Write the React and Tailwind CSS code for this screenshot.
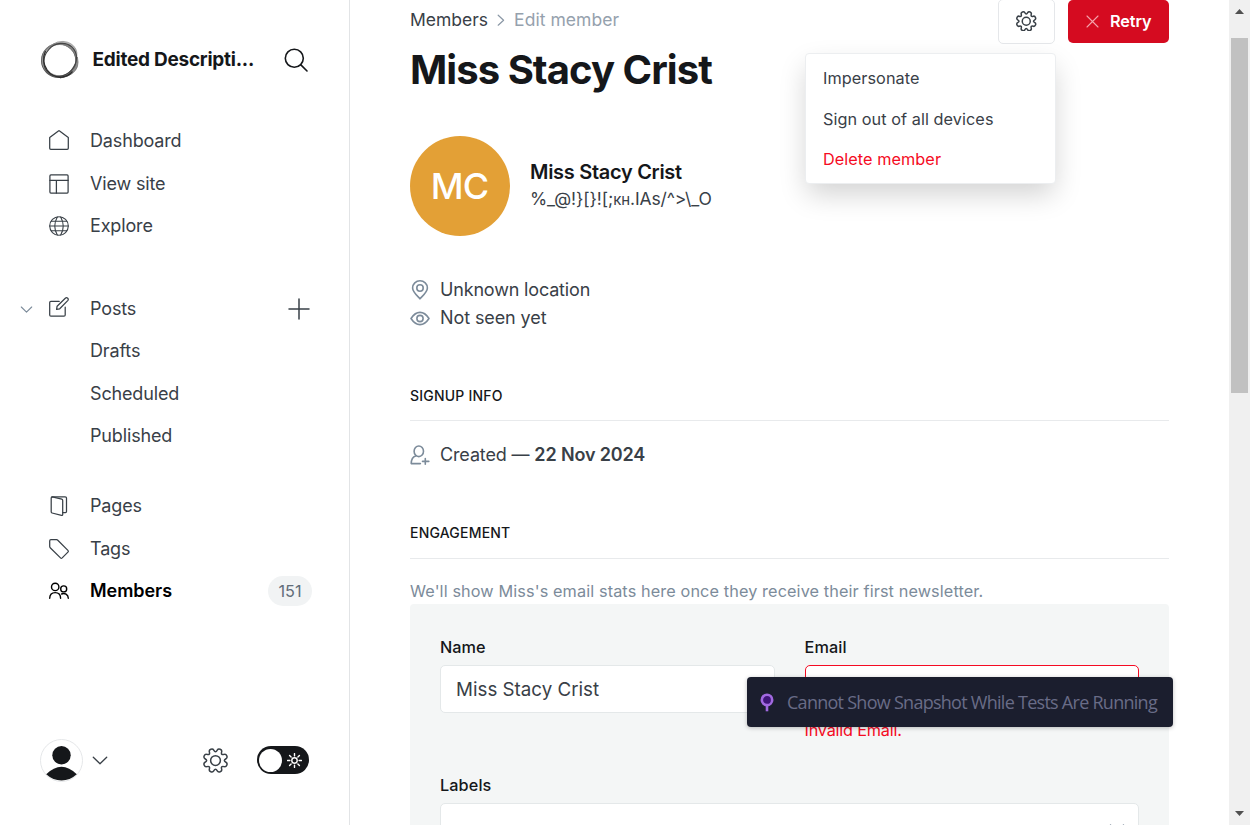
import React from "react";

function gearPath(c, outer, inner) {
  const pts = [];
  for (let i = 0; i < 8; i++) {
    const t = i * 45 + 22.5 - 90;
    pts.push([inner, t - 17], [outer, t - 10], [outer, t + 10], [inner, t + 17]);
  }
  const xy = pts.map(([r, a]) => [
    c + r * Math.cos((a * Math.PI) / 180),
    c + r * Math.sin((a * Math.PI) / 180),
  ]);
  const mid = (a, b) => [(a[0] + b[0]) / 2, (a[1] + b[1]) / 2];
  const f = (p) => `${p[0].toFixed(2)} ${p[1].toFixed(2)}`;
  let d = `M${f(mid(xy[xy.length - 1], xy[0]))}`;
  xy.forEach((p, i) => {
    d += `Q${f(p)} ${f(mid(p, xy[(i + 1) % xy.length]))}`;
  });
  return d + "Z";
}

function Svg({ w, h, sw = 1.25, className = "", children }) {
  return (
    <svg
      width={w}
      height={h}
      viewBox={`0 0 ${w} ${h}`}
      fill="none"
      stroke="currentColor"
      strokeWidth={sw}
      strokeLinecap="round"
      strokeLinejoin="round"
      className={`shrink-0 ${className}`}
    >
      {children}
    </svg>
  );
}

function Gear({ size }) {
  const c = size / 2;
  return (
    <Svg w={size} h={size} sw={1.5}>
      <path d={gearPath(c, c - 0.1, c * 0.71)} />
      <circle cx={c} cy={c} r={size * 0.195} />
    </Svg>
  );
}

const icons = {
  home: (
    <Svg w={20} h={20} className="mb-[2px]">
      <path d="M.7 7.6V18.2q0 1.1 1.1 1.1H18.2q1.1 0 1.1-1.1V7.6L10.6.9q-.6-.4-1.2 0Z" />
    </Svg>
  ),
  layout: (
    <Svg w={20} h={20}>
      <rect x="0.9" y="0.9" width="18.2" height="18.2" rx="1" />
      <path d="M.9 6.4H19.1M7.4 6.4V19.1" />
    </Svg>
  ),
  globe: (
    <Svg w={20} h={20} sw={1.1}>
      <circle cx="10" cy="10" r="9.3" />
      <path d="M.7 10H19.3M2.3 5.2H17.7M2.3 14.8H17.7M8.3.9Q3.2 10 8.3 19.1M11.7.9Q16.8 10 11.7 19.1" />
    </Svg>
  ),
  posts: (
    <Svg w={20} h={20} className="mb-[3px]">
      <path d="M10.2 4.4H1.9q-1.2 0-1.2 1.2V18q0 1.2 1.2 1.2H15q1.2 0 1.2-1.2V10.2" />
      <path d="M7.6 12.4l.5-3.2L16.3 1.2q1.2-1 2.4 0 1.1 1.2 0 2.4L10.7 11.8Z" />
    </Svg>
  ),
  pages: (
    <Svg w={20} h={20}>
      <path d="M3 .8H16.2q1.3 0 1.3 1.3V15.6q0 1-1 1H13.7" />
      <path d="M3.2.8q-1 .1-1 1.2V15.8q0 1 .9 1.2L12.5 19.3q1.2.2 1.2-.9V4.4q0-.9-.9-1.2Z" />
    </Svg>
  ),
  tags: (
    <Svg w={20} h={20}>
      <path d="M.7 1.9Q.7.7 1.9.7H7.6q.7 0 1.2.5L18.9 11.4q.9.9 0 1.7L13.2 18.9q-.9.8-1.7 0L1.2 8.7Q.7 8.2.7 7.6Z" />
    </Svg>
  ),
  members: (
    <Svg w={20} h={20} sw={1.4}>
      <circle cx="6.2" cy="5.9" r="3.7" />
      <path d="M.7 17.3Q.9 11.6 6.2 11.6T11.6 17.3" />
      <circle cx="14.7" cy="7.9" r="3" />
      <path d="M12.6 13Q14.8 11.9 17.1 13.2 19.3 14.6 19.3 17.3" />
    </Svg>
  ),
};

function NavItem({ icon, label, active, children }) {
  return (
    <div
      className={`flex h-[42.5px] items-center text-[18px] leading-6 ${
        active
          ? "font-semibold tracking-[-0.05px] text-black"
          : "tracking-[-0.15px] text-[#394047]"
      }`}
    >
      <span className="ml-[49px] flex w-[41px] shrink-0">{icon}</span>
      <span className="flex-1">{label}</span>
      {children}
    </div>
  );
}

function Sidebar() {
  return (
    <nav className="flex h-full w-[350px] shrink-0 flex-col border-r border-[#e2e4e6] bg-white">
      <div className="flex h-[120px] items-center pl-10 text-[#15171a]">
        <svg width="40" height="40" viewBox="0 0 40 40" fill="none" className="shrink-0">
          <path d="M13 4.2Q17 1.2 23 1.4 32 2 35.8 9 37.3 12 36.8 16 31 4 23 4.2 18 3 13 4.2Z" fill="#b5b5b5" stroke="#8a8a8a" strokeWidth=".7" />
          <path d="M37.4 17Q40 28 32.2 33.5 28 37 20 38 34.5 32 37.4 17Z" fill="#8f8f8f" stroke="#666" strokeWidth=".7" />
          <ellipse cx="18.8" cy="20.6" rx="17.2" ry="16.8" strokeWidth="1.3" stroke="#555" />
          <ellipse cx="19.6" cy="20" rx="17" ry="16.2" strokeWidth="2.2" stroke="#888" strokeOpacity=".8" />
          <ellipse cx="20" cy="19.8" rx="15.4" ry="17.4" strokeWidth="1.2" stroke="#444" transform="rotate(42 20 20)" />
          <path d="M5.5 11Q1 21 7.2 30 12 36.5 20 37.3 28 37 32.5 31.5" strokeWidth="1.2" stroke="#2c2c2c" />
        </svg>
        <span className="ml-[12.5px] w-[179.5px] text-[19px] font-bold tracking-[-0.25px]">Edited Descripti...</span>
        <Svg w={24} h={24} sw={1.6} className="ml-[12px]">
          <circle cx="10.3" cy="10.3" r="9" />
          <path d="M16.9 16.9L23 23" />
        </Svg>
      </div>
      <NavItem icon={icons.home} label="Dashboard" />
      <NavItem icon={icons.layout} label="View site" />
      <NavItem icon={icons.globe} label="Explore" />
      <div className="relative mt-10">
        <Svg w={13} h={8} sw={1.1} className="absolute left-5 top-[18px] text-[#7c8b9a]">
          <path d="M1.3 1L6.5 6.2 11.7 1" />
        </Svg>
        <NavItem icon={icons.posts} label="Posts">
          <Svg w={22} h={22} sw={1.5} className="mr-[39px]">
            <path d="M11 1V21M1 11H21" />
          </Svg>
        </NavItem>
      </div>
      <NavItem label="Drafts" />
      <NavItem label="Scheduled" />
      <NavItem label="Published" />
      <div className="h-[27.5px]" />
      <NavItem icon={icons.pages} label="Pages" />
      <NavItem icon={icons.tags} label="Tags" />
      <NavItem icon={icons.members} label="Members" active>
        <span className="mr-[37px] flex h-[30px] w-11 items-center justify-center rounded-full bg-[#f1f3f4] text-[16.25px] font-normal tracking-normal text-[#626d79]">
          151
        </span>
      </NavItem>
      <div className="mt-auto mb-11 flex h-[42px] items-center pl-10 text-[#394047]">
        <svg width="43" height="43" viewBox="0 0 43 43" className="shrink-0">
          <circle cx="21.5" cy="21.5" r="21" fill="#fff" stroke="#e5e7e9" />
          <circle cx="21.5" cy="16.3" r="9.2" fill="#15171a" />
          <path d="M6.2 35.3Q21.5 20.2 36.8 35.3 30 41.5 21.5 41.5T6.2 35.3Z" fill="#15171a" />
        </svg>
        <Svg w={16} h={9} sw={1.3} className="ml-[9px]">
          <path d="M1.3 1.2L8 7.8 14.7 1.2" />
        </Svg>
        <span className="ml-[95.4px] flex">
          <Gear size={25} />
        </span>
        <span className="ml-[28.6px] flex h-7 w-[52px] items-center justify-between rounded-full bg-[#15171a] pl-0.5 pr-[7px]">
          <span className="h-[23px] w-[23px] rounded-full bg-white" />
          <Svg w={15} h={15} sw={1.4} className="text-white">
            <circle cx="7.5" cy="7.5" r="2.7" />
            <path d="M7.5.6V2.9M7.5 12.1V14.4M.6 7.5H2.9M12.1 7.5H14.4M2.6 2.6L4.1 4.1M10.9 10.9L12.4 12.4M2.6 12.4L4.1 10.9M10.9 4.1L12.4 2.6" />
          </Svg>
        </span>
      </div>
    </nav>
  );
}

function Menu() {
  return (
    <div className="absolute right-[113px] top-[53px] z-10 flex h-[131px] w-[251px] flex-col rounded-[4px] border border-[#eceef0] bg-white pl-[17px] pt-1 text-[16.25px] tracking-[0.06px] text-[#394047] shadow-[0_12px_28px_-2px_rgba(0,0,0,0.18)]">
      <span className="h-[40.6px] leading-[40.6px]">Impersonate</span>
      <span className="h-[40.6px] leading-[40.6px]">Sign out of all devices</span>
      <span className="h-[40.6px] leading-[40.6px] text-[#f50b23]">Delete member</span>
    </div>
  );
}

function Main() {
  return (
    <main className="relative flex h-full w-[759px] shrink-0 flex-col">
      <header className="flex h-[43px] shrink-0">
        <div className="flex h-10 flex-1 items-center text-[17.5px]">
          <span className="text-[#394047]">Members</span>
          <Svg w={8} h={12} sw={1.2} className="ml-[9px] mr-[9px] text-[#8a97a5]">
            <path d="M1.2 1.2L6.6 6.2 1.2 11.2" />
          </Svg>
          <span className="tracking-[0.05px] text-[#95a1ad]">Edit member</span>
        </div>
        <button className="-mt-px mr-[13px] flex h-[45px] w-[57px] items-center justify-center rounded-[5px] border border-[#e5e7ea] pb-px text-[#394047]">
          <Gear size={20.5} />
        </button>
        <button className="flex h-[43px] w-[101px] items-center rounded-[5px] bg-[#d50b20] pl-[18px] text-[16.25px] font-semibold tracking-[-0.1px] text-white">
          <Svg w={13} h={13} sw={1.1} className="mr-[11px] text-[#f5a3ab]">
            <path d="M1 1L12 12M12 1L1 12" />
          </Svg>
          Retry
        </button>
      </header>
      <Menu />
      <h1 className="mt-[3px] h-12 shrink-0 text-[40px] font-bold leading-[48px] tracking-[-0.95px] text-[#15171a]">
        Miss Stacy Crist
      </h1>
      <div className="mt-[42px] flex h-[100px] shrink-0 items-center">
        <div className="flex h-[100px] w-[100px] items-center justify-center rounded-full bg-[#e3a036] pr-px text-[36px] font-medium tracking-[-1px] text-white">
          MC
        </div>
        <div className="ml-5">
          <h3 className="h-[27px] text-[20px] font-semibold leading-[27px] tracking-[-0.3px] text-[#15171a]">Miss Stacy Crist</h3>
          <p className="h-[27px] text-[17.5px] leading-[25px] tracking-[-0.12px] text-[#394047]">
            {"%_@!}[}![;"}
            <span className="text-[15px]">кн</span>
            {".IAs/^>\\_O"}
          </p>
        </div>
      </div>
      <div className="mt-10 flex h-7 shrink-0 items-center text-[18px] tracking-[-0.17px] text-[#394047]">
        <Svg w={20} h={20} sw={1.6} className="mr-[10px] text-[#7c8b9a]">
          <path d="M10 18.8C8 16.6 2.6 12 2.6 8A7.4 7.2 0 0 1 17.4 8C17.4 12 12 16.6 10 18.8Z" />
          <circle cx="10" cy="8" r="3.2" />
        </Svg>
        <span className="pb-[2px]">Unknown location</span>
      </div>
      <div className="flex h-7 shrink-0 items-center text-[18px] tracking-[-0.1px] text-[#394047]">
        <Svg w={20} h={20} sw={1.6} className="mr-[10px] text-[#7c8b9a]">
          <path d="M1 10.5Q5 4.4 10 4.4T19 10.5Q15 16.6 10 16.6T1 10.5Z" />
          <circle cx="10" cy="10.5" r="3.1" />
        </Svg>
        <span className="pb-[2px]">Not seen yet</span>
      </div>
      <h4 className="mt-[54px] h-[35px] shrink-0 border-b border-[#e8eaec] text-[14px] font-medium leading-[20px] tracking-[0.2px] text-[#15171a]">
        SIGNUP INFO
      </h4>
      <div className="mt-5 flex h-7 shrink-0 items-center text-[18px] tracking-[-0.14px] text-[#394047]">
        <Svg w={20} h={20} sw={1.6} className="mr-[10px] text-[#7c8b9a]">
          <ellipse cx="8.8" cy="6.3" rx="4.7" ry="5.3" />
          <path d="M5.7 10.9Q1.3 12.2 1.2 18.6H10.4M15.3 13.6V19.2M12.5 16.4H18.8" />
        </Svg>
        <span className="pb-[2px]">
          Created — <b className="font-semibold">22 Nov 2024</b>
        </span>
      </div>
      <h4 className="mt-[54px] h-[36px] shrink-0 border-b border-[#e8eaec] text-[14px] font-medium leading-[20px] tracking-[0.2px] text-[#15171a]">
        ENGAGEMENT
      </h4>
      <p className="mt-5 h-[25px] shrink-0 text-[16.25px] leading-6 tracking-[0.11px] text-[#7c8b9a]">
        We'll show Miss's email stats here once they receive their first newsletter.
      </p>
      <section className="h-[260px] shrink-0 rounded-t-[4px] bg-[#f4f6f6] px-[30px] pt-8 text-[16.25px] text-[#15171a]">
        <div className="grid h-[138px] grid-cols-2 gap-[30px]">
          <label>
            <span className="block h-[29px] font-medium leading-[23px]">Name</span>
            <span className="flex h-12 items-center rounded-[5px] border border-[#e4e8e9] bg-white pl-[15px] pt-[2px] text-[18.75px] text-[#394047]">
              Miss Stacy Crist
            </span>
          </label>
          <label>
            <span className="block h-[29px] font-medium leading-[23px] tracking-[0.1px]">Email</span>
            <span className="block h-12 rounded-[5px] border border-[#f50b23] bg-white" />
            <span className="block h-[34px] leading-[34px] tracking-[-0.2px] text-[#f50b23]">Invalid Email.</span>
          </label>
        </div>
        <div className="h-[29px] font-medium leading-[23px] tracking-[0.1px]">Labels</div>
        <div className="flex h-12 items-start justify-end rounded-[5px] border border-[#e4e8e9] bg-white pr-[13px] pt-5">
          <Svg w={16} h={9} sw={1.3} className="text-[#7c8b9a]">
            <path d="M1.5 1L8 7.5 14.5 1" />
          </Svg>
        </div>
      </section>
    </main>
  );
}

function Scrollbar() {
  return (
    <div className="ml-auto flex h-full w-[21px] flex-col items-center bg-[#f0f0f0]">
      <svg width="9" height="5" viewBox="0 0 9 5" className="mt-[9px] shrink-0">
        <path d="M0 5L4.5 0 9 5Z" fill="#505050" />
      </svg>
      <div className="mt-6 h-[355px] w-[17px] bg-[#c1c1c1]" />
      <svg width="9" height="5" viewBox="0 0 9 5" className="mt-auto mb-[9px] shrink-0">
        <path d="M0 0L4.5 5 9 0Z" fill="#505050" />
      </svg>
    </div>
  );
}

export default function App() {
  return (
    <div className="relative flex h-[825px] w-[1250px] overflow-hidden bg-white font-['Inter',sans-serif]">
      <Sidebar />
      <div className="w-[60px] shrink-0" />
      <Main />
      <Scrollbar />
      <div className="absolute left-[747px] top-[677px] z-20 flex h-[50px] w-[426px] items-center rounded-[4px] bg-[#1b1e2e] pl-[13px] shadow-[0_1px_4px_rgba(0,0,0,0.25)]">
        <svg width="14" height="19" viewBox="0 0 14 19" className="shrink-0">
          <path d="M7 11V18.3" stroke="#a169e0" strokeWidth="2.6" />
          <circle cx="7" cy="6.9" r="5.2" fill="#3f1578" stroke="#a169e0" strokeWidth="2.6" />
        </svg>
        <span className="ml-[13px] whitespace-nowrap font-['Open_Sans',sans-serif] text-[18px] tracking-[-0.73px] text-[#696c87]">
          Cannot Show Snapshot While Tests Are Running
        </span>
      </div>
    </div>
  );
}
